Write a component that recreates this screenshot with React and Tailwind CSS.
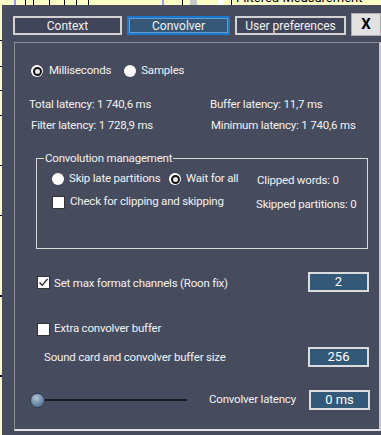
import React from "react";

const font = { fontFamily: "Roboto, 'Liberation Sans', Arial, sans-serif" };

function Radio({ checked }) {
  return (
    <span className="flex h-[12px] w-[12px] shrink-0 items-center justify-center rounded-full bg-white">
      {checked && <span className="h-[9px] w-[9px] rounded-full border-[2.5px] border-[#111] bg-[#e8e8e8]" />}
    </span>
  );
}

function Check({ checked }) {
  return (
    <span className="flex h-[13px] w-[13px] shrink-0 items-center justify-center border border-[#333] bg-white">
      {checked && (
        <svg width="11" height="11" viewBox="0 0 11 11">
          <path d="M1.5 5.5 L4.2 8.3 L9.5 2" fill="none" stroke="#222" strokeWidth="1.3" />
        </svg>
      )}
    </span>
  );
}

function Field({ value }) {
  return (
    <div className="flex h-[20px] w-[61px] shrink-0 items-center justify-center border-2 border-[#dcdcdc] bg-[#345878] text-[13px] tracking-normal text-white">
      {value}
    </div>
  );
}

export default function App() {
  return (
    <div className="relative h-[435px] w-[381px] overflow-hidden bg-[#fbfbc4]" style={font}>
      {/* background canvas behind the dialog */}
      <div className="absolute left-[14px] top-0 h-[6px] w-[2px] bg-[#9a9af0]" />
      <div className="absolute left-[25px] top-0 h-[6px] w-px border-l border-dashed border-black" />
      <div className="absolute left-[33px] top-0 h-[6px] w-px border-l border-dashed border-black" />
      <div className="absolute left-[49px] top-0 h-[6px] w-px border-l border-dashed border-black" />
      <div className="absolute left-[64px] top-0 h-[6px] w-px border-l border-dashed border-black" />
      <div className="absolute left-[76px] top-0 h-[6px] w-px border-l border-dashed border-black" />
      <div className="absolute left-[88px] top-0 h-[6px] w-px bg-black" />
      <div className="absolute left-[162px] top-0 h-[6px] w-[2px] bg-[#9a9af0]" />
      <div className="absolute left-[182px] top-0 h-[6px] w-px bg-black" />
      <div className="absolute left-[190px] top-0 h-[6px] w-[7px] bg-[#c8c8c8]" />
      <div className="absolute left-[218px] top-0 h-[6px] w-[6px] bg-white" />
      <div className="absolute left-[231px] top-0 h-[6px] w-px bg-black" />
      <div className="absolute left-[236px] top-[-9px] whitespace-nowrap text-[13px] leading-[14px] text-black">Filtered Measurement</div>
      <div className="absolute left-0 top-[40px] h-px w-[3px] bg-black" />
      <div className="absolute left-0 top-[66px] h-px w-[3px] bg-black" />
      <div className="absolute left-0 top-[90px] h-px w-[3px] bg-black" />
      <div className="absolute left-0 top-[115px] h-px w-[3px] bg-black" />
      <div className="absolute left-0 top-[165px] h-px w-[3px] bg-black" />
      <div className="absolute left-0 top-[215px] h-px w-[3px] bg-black" />
      <div className="absolute left-0 top-[295px] h-[2px] w-[3px] bg-black" />
      <div className="absolute left-0 top-[375px] h-[2px] w-[3px] bg-black" />

      {/* dialog window */}
      <div className="absolute bottom-0 left-[2px] right-0 top-[5px] flex flex-col whitespace-nowrap bg-[#464b5d] text-[11.5px] tracking-[-0.2px] text-[#f2f2f2]">
        {/* tabs */}
        <div className="ml-[11px] mt-[8px] flex items-start">
          <div className="mt-[3px] flex h-[19px] w-[109px] items-center justify-center border-2 border-[#d2d2d2] bg-[#404559] text-[12px] tracking-normal">Context</div>
          <div className="ml-[5px] mt-[3px] flex h-[19px] w-[103px] items-center justify-center border-2 border-[#1a78d0] bg-[#355878] text-[12px] tracking-normal shadow-[inset_0_0_0_1px_#6a9ac8]">Convolver</div>
          <div className="ml-[5px] mt-[3px] flex h-[19px] w-[111px] items-center justify-center border-2 border-[#d2d2d2] bg-[#404559] text-[12px] tracking-normal">User preferences</div>
          <div className="ml-[5px] flex h-[23px] w-[30px] items-center justify-center border border-[#adadad] bg-[#e1e1e1] text-[15px] font-bold tracking-normal text-black">X</div>
        </div>

        {/* panel */}
        <div className="ml-[12px] mt-[6px] mb-[4px] flex flex-1 flex-col border-l border-t border-l-[#8c8e98] border-t-[#8c8e98] border-r-2 border-b-2 border-r-[#c8c8cc] border-b-[#e4e4e4]">
          <div className="ml-[16px] mt-[21px] flex h-[14px] items-center">
            <Radio checked />
            <span className="ml-[6px]">Milliseconds</span>
            <span className="ml-[13px]"><Radio /></span>
            <span className="ml-[5px]">Samples</span>
          </div>

          <div className="mt-[20px] flex h-[14px] items-center">
            <span className="ml-[14px] w-[181px]">Total latency: 1 740,6 ms</span>
            <span>Buffer latency: 11,7 ms</span>
          </div>
          <div className="mt-[7px] flex h-[14px] items-center">
            <span className="ml-[16px] w-[180px]">Filter latency: 1 728,9 ms</span>
            <span>Minimum latency: 1 740,6 ms</span>
          </div>

          <fieldset className="ml-[21px] mt-[18px] h-[98px] w-[332px] border border-[#d8d8d8] pl-[15px] pr-0">
            <legend className="ml-[-8px] px-[1px] text-[11.5px] leading-[14px]">Convolution management</legend>
            <div className="mt-[7px] flex h-[14px] items-center">
              <Radio />
              <span className="ml-[5px] w-[100px] shrink-0">Skip late partitions</span>
              <Radio checked />
              <span className="ml-[5px] w-[71px] shrink-0">Wait for all</span>
              <span className="mt-[3px]">Clipped words: 0</span>
            </div>
            <div className="mt-[9px] flex h-[14px] items-center">
              <Check />
              <span className="ml-[5px] w-[186px] shrink-0">Check for clipping and skipping</span>
              <span className="mt-[5px]">Skipped partitions: 0</span>
            </div>
          </fieldset>

          <div className="mt-[23px] flex h-[20px] items-center">
            <span className="ml-[22px]"><Check checked /></span>
            <span className="ml-[4px] mt-[3px] w-[254px] shrink-0">Set max format channels (Roon fix)</span>
            <Field value="2" />
          </div>

          <div className="mt-[30px] flex h-[14px] items-center">
            <span className="ml-[22px]"><Check /></span>
            <span className="ml-[4px]">Extra convolver buffer</span>
          </div>

          <div className="mt-[11px] flex h-[20px] items-center">
            <span className="ml-[29px] mt-[2px] w-[264px] shrink-0">Sound card and convolver buffer size</span>
            <Field value="256" />
          </div>

          <div className="mt-[23px] flex h-[20px] items-center">
            <div className="ml-[15px] flex shrink-0 items-center">
              <span className="h-[15px] w-[15px] rounded-full border border-[#2c3e52] bg-[radial-gradient(circle_at_40%_30%,#b4c4d6,#6f8aa8_55%,#4a6584)]" />
              <span className="h-[2px] w-[142px] bg-[#1c1c22]" />
            </div>
            <span className="ml-[22px] w-[100px] shrink-0">Convolver latency</span>
            <Field value="0 ms" />
          </div>
        </div>
      </div>
    </div>
  );
}
